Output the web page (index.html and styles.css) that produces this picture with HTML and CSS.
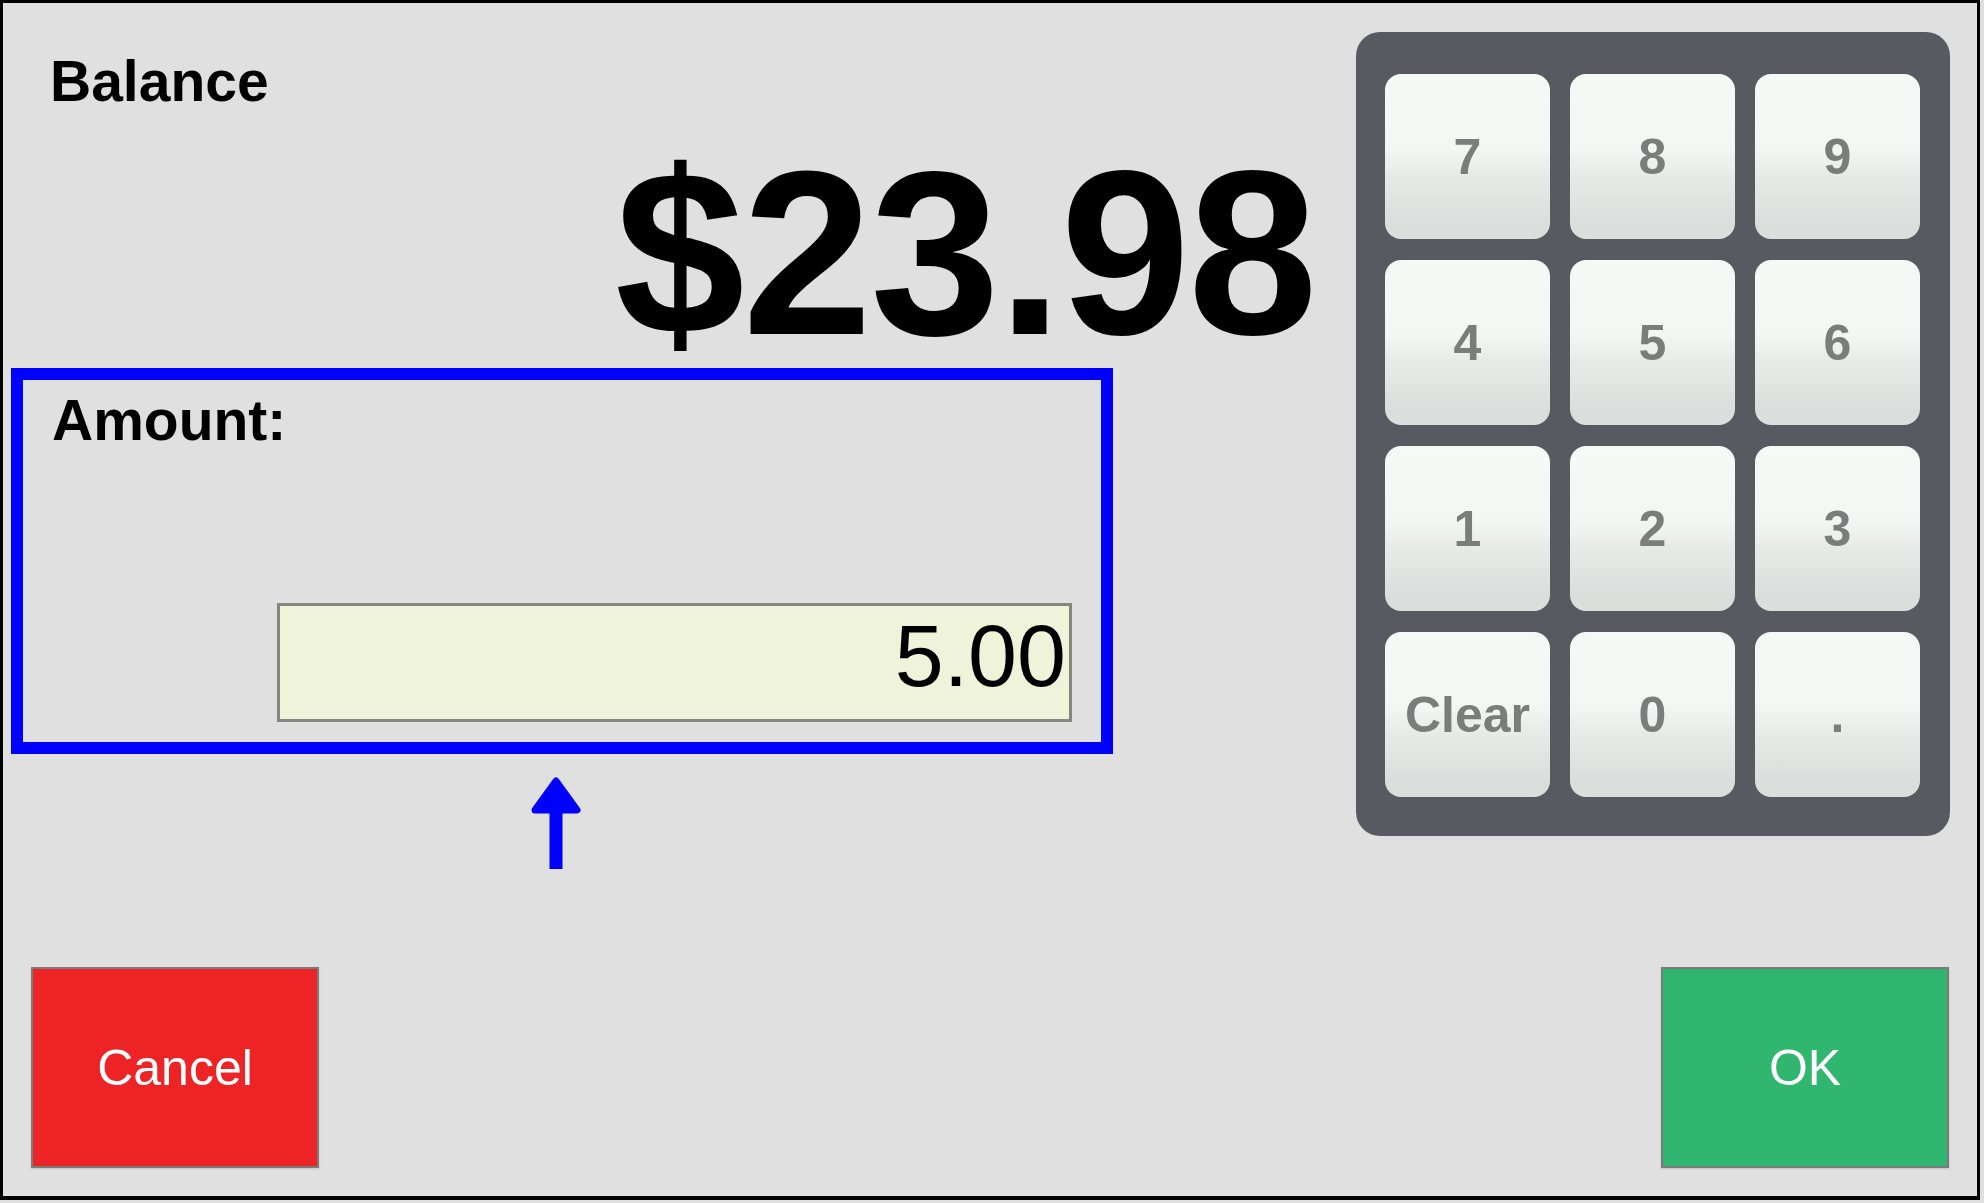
FILE: index.html
```html
<!DOCTYPE html>
<html lang="en">
<head>
<meta charset="utf-8">
<title>Balance</title>
<link rel="stylesheet" href="styles.css">
</head>
<body>
<div class="frame">
  <div class="top">
    <div class="left">
      <div class="balance-label">Balance</div>
      <div class="balance-amount">$23.98</div>
      <div class="amount-box">
        <div class="amount-label">Amount:</div>
        <div class="amount-input">5.00</div>
      </div>
      <svg class="arrow" width="50" height="92" viewBox="0 0 50 92">
        <polygon points="25,4 46,33 4,33" fill="#0000ff" stroke="#0000ff" stroke-width="7" stroke-linejoin="round"/>
        <rect x="18.5" y="30" width="13" height="62" fill="#0000ff"/>
      </svg>
    </div>
    <div class="keypad">
      <div class="key">7</div>
      <div class="key">8</div>
      <div class="key">9</div>
      <div class="key">4</div>
      <div class="key">5</div>
      <div class="key">6</div>
      <div class="key">1</div>
      <div class="key">2</div>
      <div class="key">3</div>
      <div class="key">Clear</div>
      <div class="key">0</div>
      <div class="key">.</div>
    </div>
  </div>
  <div class="bottom">
    <div class="btn btn-cancel">Cancel</div>
    <div class="btn btn-ok">OK</div>
  </div>
</div>
</body>
</html>
```
FILE: styles.css
```css
html, body {
  margin: 0;
  padding: 0;
  background: #e0e0e0;
}
body {
  font-family: "Liberation Sans", Arial, sans-serif;
}
.frame {
  box-sizing: border-box;
  width: 1980px;
  height: 1200px;
  border: 3px solid #000;
  border-bottom-width: 4px;
  background: #e0e0e0;
  display: flex;
  flex-direction: column;
}
.top {
  display: flex;
  justify-content: space-between;
}
.left {
  flex: 1;
  display: flex;
  flex-direction: column;
  align-items: flex-start;
}
.balance-label {
  font-size: 57px;
  line-height: 57px;
  font-weight: bold;
  color: #000;
  margin-top: 50px;
  margin-left: 47px;
}
.balance-amount {
  font-size: 233px;
  line-height: 200px;
  font-weight: bold;
  color: #000;
  letter-spacing: -2px;
  margin-top: 43px;
  margin-left: 612px;
  white-space: nowrap;
}
.amount-box {
  box-sizing: border-box;
  width: 1102px;
  height: 386px;
  margin-top: 15px;
  margin-left: 8px;
  border: 12px solid #0000ff;
  display: flex;
  flex-direction: column;
  align-items: flex-start;
}
.amount-label {
  font-size: 57px;
  line-height: 57px;
  font-weight: bold;
  color: #000;
  margin-top: 12px;
  margin-left: 29px;
}
.amount-input {
  box-sizing: border-box;
  width: 795px;
  height: 119px;
  margin-top: auto;
  margin-bottom: 20px;
  margin-left: auto;
  margin-right: 29px;
  background: #eff3d9;
  border: 3px solid #858680;
  display: flex;
  align-items: center;
  justify-content: flex-end;
  padding: 0 3px 14px 0;
  font-size: 88px;
  line-height: 88px;
  color: #000;
}
.arrow {
  display: block;
  margin-top: 23px;
  margin-left: 528px;
}
.keypad {
  box-sizing: border-box;
  width: 594px;
  height: 804px;
  margin-top: 29px;
  margin-right: 27px;
  background: #595a61;
  border-radius: 24px;
  padding: 42px 30px 39px 29px;
  display: grid;
  grid-template-columns: repeat(3, 1fr);
  grid-template-rows: repeat(4, 1fr);
  column-gap: 20px;
  row-gap: 21px;
}
.key {
  border-radius: 16px;
  background: linear-gradient(to bottom, #f6faf7 0%, #f3f7f4 45%, #e7eae7 62%, #dadddb 92%, #dcdfdc 100%);
  display: flex;
  align-items: center;
  justify-content: center;
  font-size: 50px;
  font-weight: bold;
  color: #7b7c7c;
}
.bottom {
  margin-top: auto;
  display: flex;
  justify-content: space-between;
  padding: 0 28px 28px 28px;
}
.btn {
  box-sizing: border-box;
  width: 288px;
  height: 201px;
  border: 2px solid #7a7a7a;
  display: flex;
  align-items: center;
  justify-content: center;
  font-size: 50px;
  color: #fff;
  box-shadow: 0 1px 2px rgba(0, 0, 0, 0.15);
}
.btn-cancel {
  background: #ee2326;
}
.btn-ok {
  background: #31b670;
}
```
